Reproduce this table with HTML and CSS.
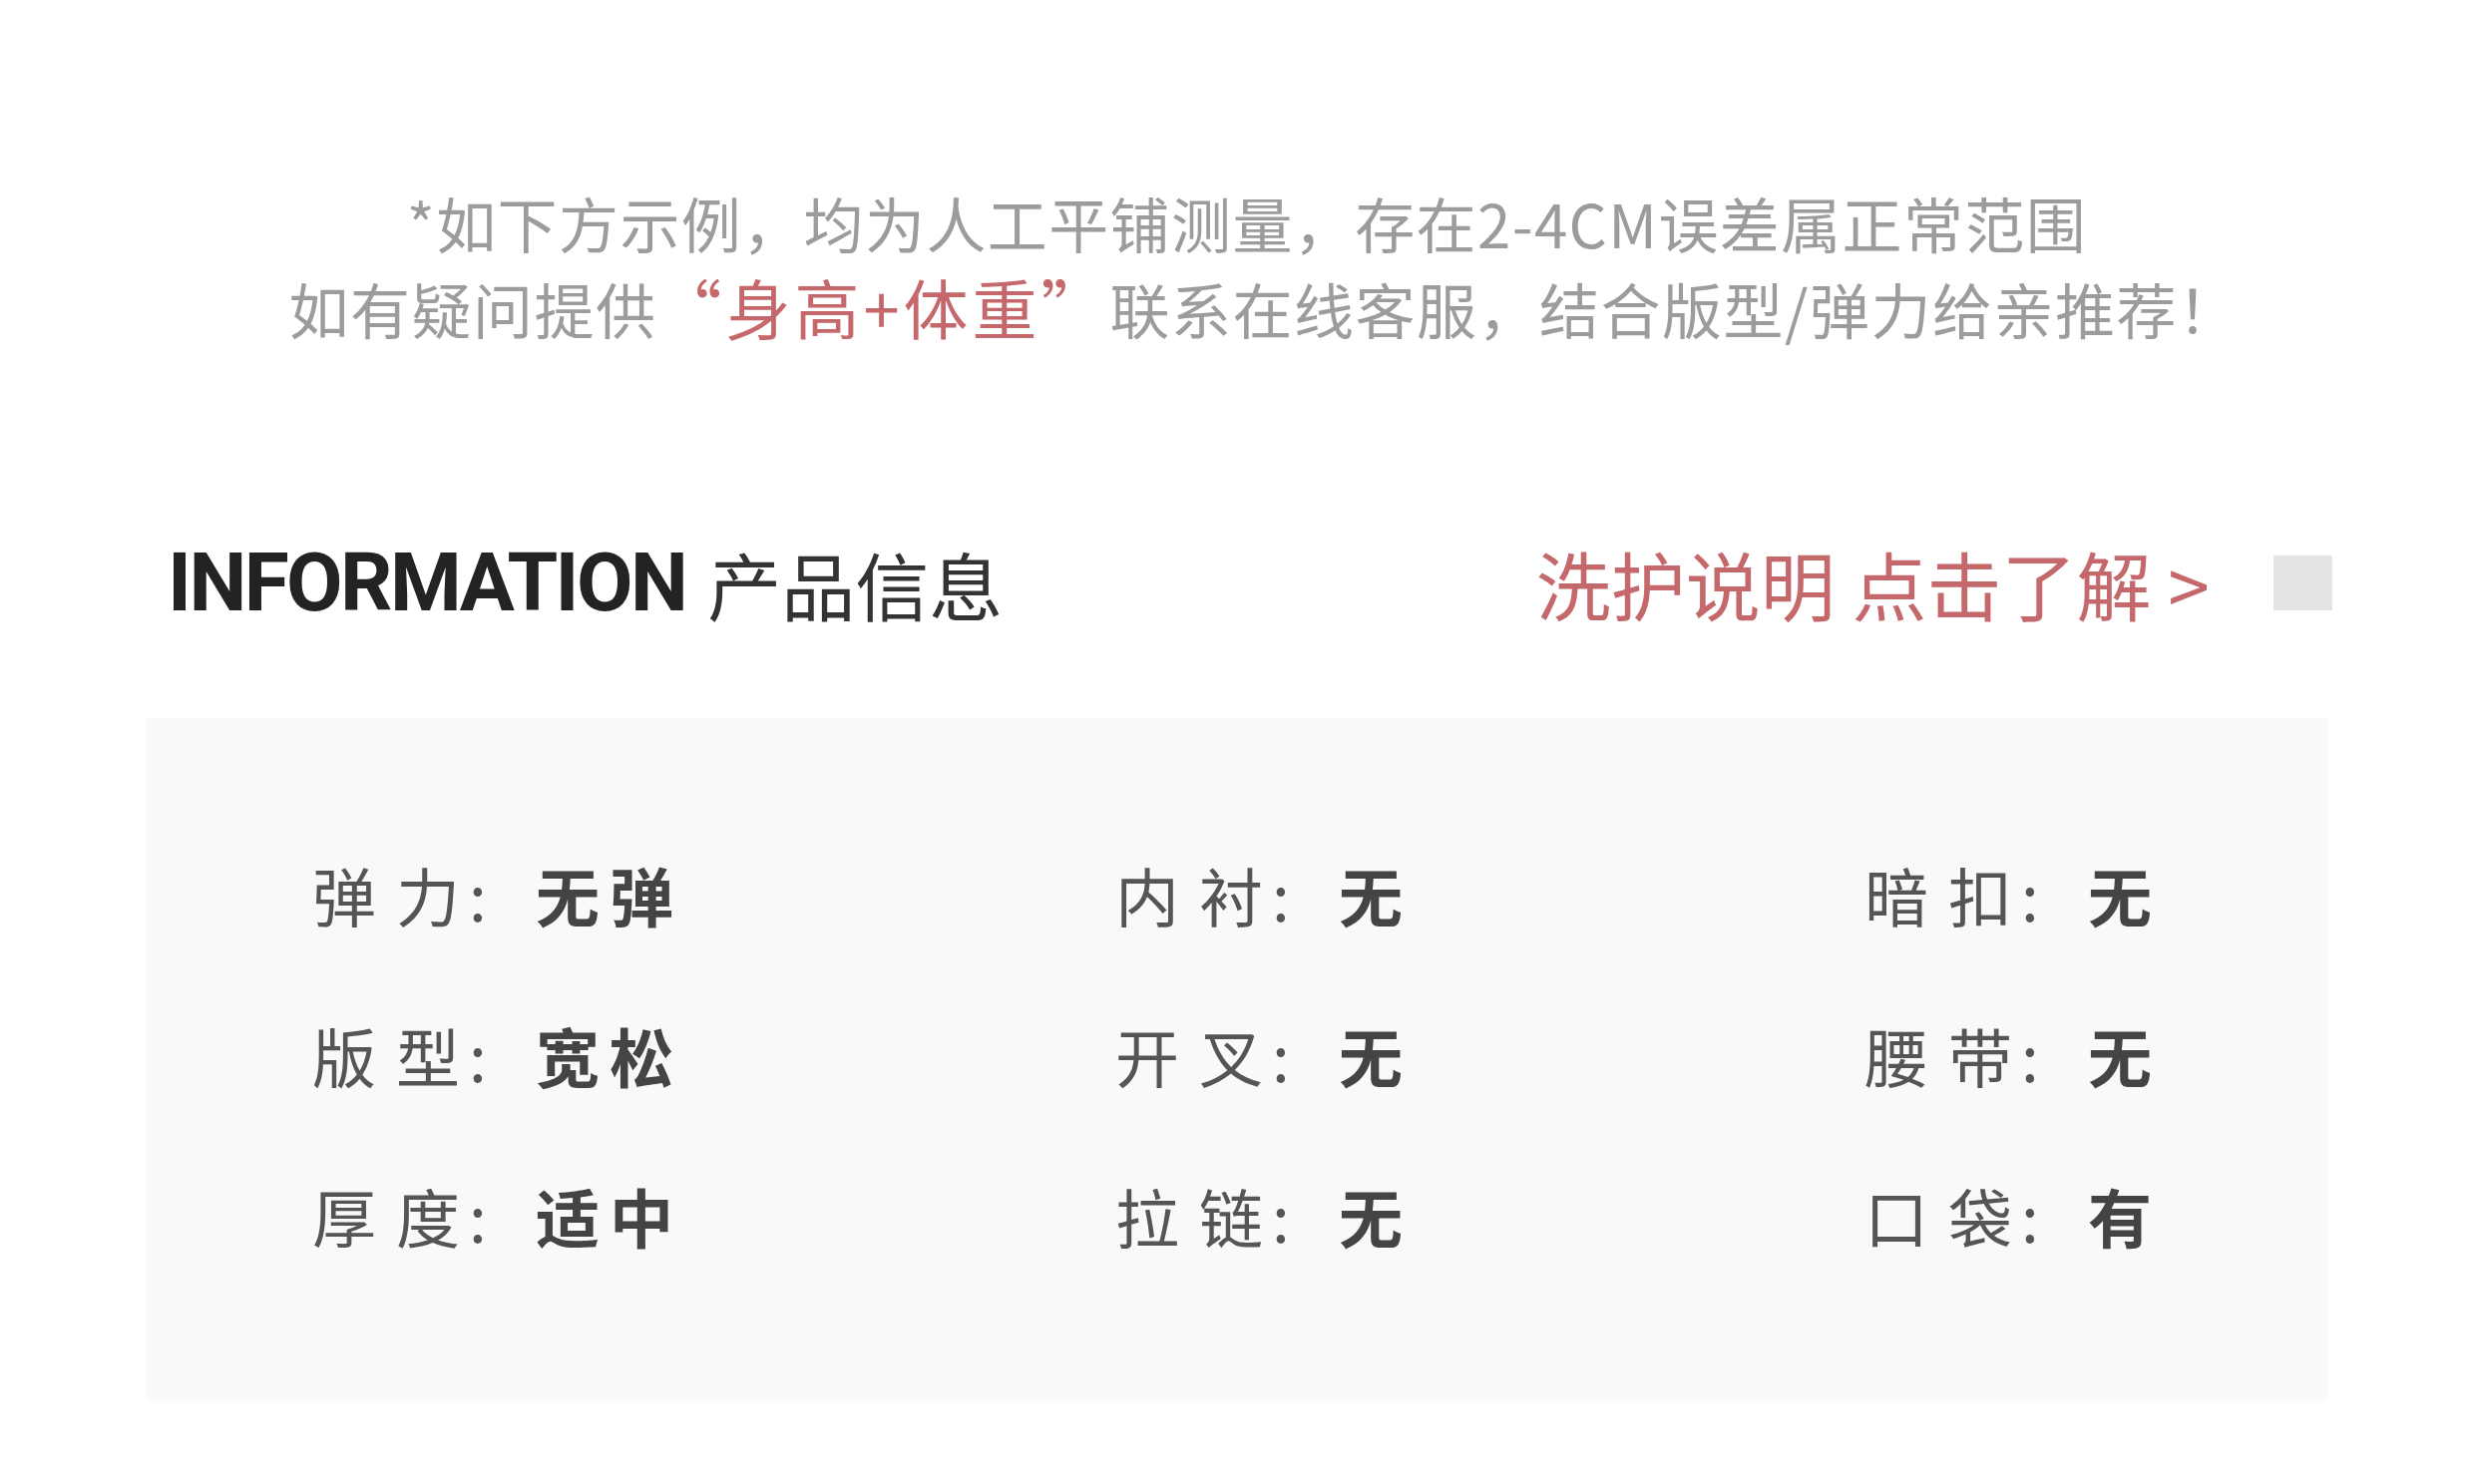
FILE: index.html
```html
<!DOCTYPE html>
<html lang="zh-CN">
<head>
<meta charset="utf-8">
<title>产品信息</title>
<link rel="stylesheet" href="styles.css">
</head>
<body>
<div class="page">
  <div class="note">
    <p class="note-line l1">*如下方示例，均为人工平铺测量，存在2-4CM误差属正常范围</p>
    <p class="note-line l2">如有疑问提供<span class="hl">“身高+体重”</span>联系在线客服，结合版型/弹力给亲推荐！</p>
  </div>

  <div class="head">
    <div class="head-title">
      <span class="en">INFORMATION</span>
      <span class="cn">产品信息</span>
    </div>
    <div class="head-link">
      <span class="link">洗护说明 点击了解 &gt;</span>
      <span class="sq"></span>
    </div>
  </div>

  <div class="panel">
    <div class="item"><span class="k"><span>弹</span><span>力</span></span><span class="c">:</span><span class="v">无弹</span></div>
    <div class="item"><span class="k"><span>内</span><span>衬</span></span><span class="c">:</span><span class="v">无</span></div>
    <div class="item"><span class="k"><span>暗</span><span>扣</span></span><span class="c">:</span><span class="v">无</span></div>
    <div class="item"><span class="k"><span>版</span><span>型</span></span><span class="c">:</span><span class="v">宽松</span></div>
    <div class="item"><span class="k"><span>开</span><span>叉</span></span><span class="c">:</span><span class="v">无</span></div>
    <div class="item"><span class="k"><span>腰</span><span>带</span></span><span class="c">:</span><span class="v">无</span></div>
    <div class="item"><span class="k"><span>厚</span><span>度</span></span><span class="c">:</span><span class="v">适中</span></div>
    <div class="item"><span class="k"><span>拉</span><span>链</span></span><span class="c">:</span><span class="v">无</span></div>
    <div class="item"><span class="k"><span>口</span><span>袋</span></span><span class="c">:</span><span class="v">有</span></div>
  </div>
</div>
</body>
</html>
```

FILE: styles.css
```css
html, body {
  margin: 0;
  padding: 0;
  background: #ffffff;
}

body {
  font-family: "Noto Sans CJK SC", "Noto Sans", sans-serif;
  width: 2480px;
  height: 1488px;
  overflow: hidden;
}

.page {
  display: flex;
  flex-direction: column;
}

.note {
  padding-top: 181px;
  text-align: center;
}

.note-line {
  margin: 0;
  font-size: 60px;
  line-height: 84px;
  color: #9c9c9c;
  font-weight: 400;
}

.l1 {
  letter-spacing: 1.4px;
  padding-left: 20px;
}

.l2 {
  letter-spacing: 1.5px;
  padding-left: 54px;
}

.hl {
  color: #c4686c;
  font-size: 65px;
  letter-spacing: 4px;
}

.head {
  margin-top: 183px;
  height: 100px;
  display: flex;
  align-items: center;
  justify-content: space-between;
  padding-left: 168px;
  padding-right: 142px;
}

.head-title {
  display: flex;
  align-items: center;
  gap: 22px;
}

.en {
  font-family: Roboto, "Noto Sans", sans-serif;
  font-weight: 700;
  font-size: 82px;
  letter-spacing: -2.6px;
  color: #232323;
}

.cn {
  font-size: 74px;
  color: #333333;
  font-weight: 400;
}

.head-link {
  display: flex;
  align-items: center;
  gap: 64px;
}

.link {
  font-size: 75px;
  color: #c4686c;
}

.sq {
  width: 59px;
  height: 55px;
  background: #e4e4e4;
}

.panel {
  margin-top: 87px;
  margin-left: 147px;
  width: 2186px;
  height: 683px;
  box-sizing: border-box;
  background: #f9f9f9;
  box-shadow: 0 0 6px rgba(0, 0, 0, 0.035);
  padding: 135px 0 0 166px;
  display: grid;
  grid-template-columns: 805px 751px auto;
  grid-auto-rows: 80px;
  row-gap: 81px;
  align-content: start;
}

.item {
  display: flex;
  align-items: center;
  font-size: 64px;
  white-space: nowrap;
}

.k {
  display: inline-flex;
  gap: 20px;
  color: #555555;
}

.c {
  color: #555555;
  display: inline-block;
  width: 67px;
  padding-left: 9px;
  box-sizing: content-box;
}

.v {
  color: #444444;
  font-weight: 700;
  letter-spacing: 10px;
}
```
